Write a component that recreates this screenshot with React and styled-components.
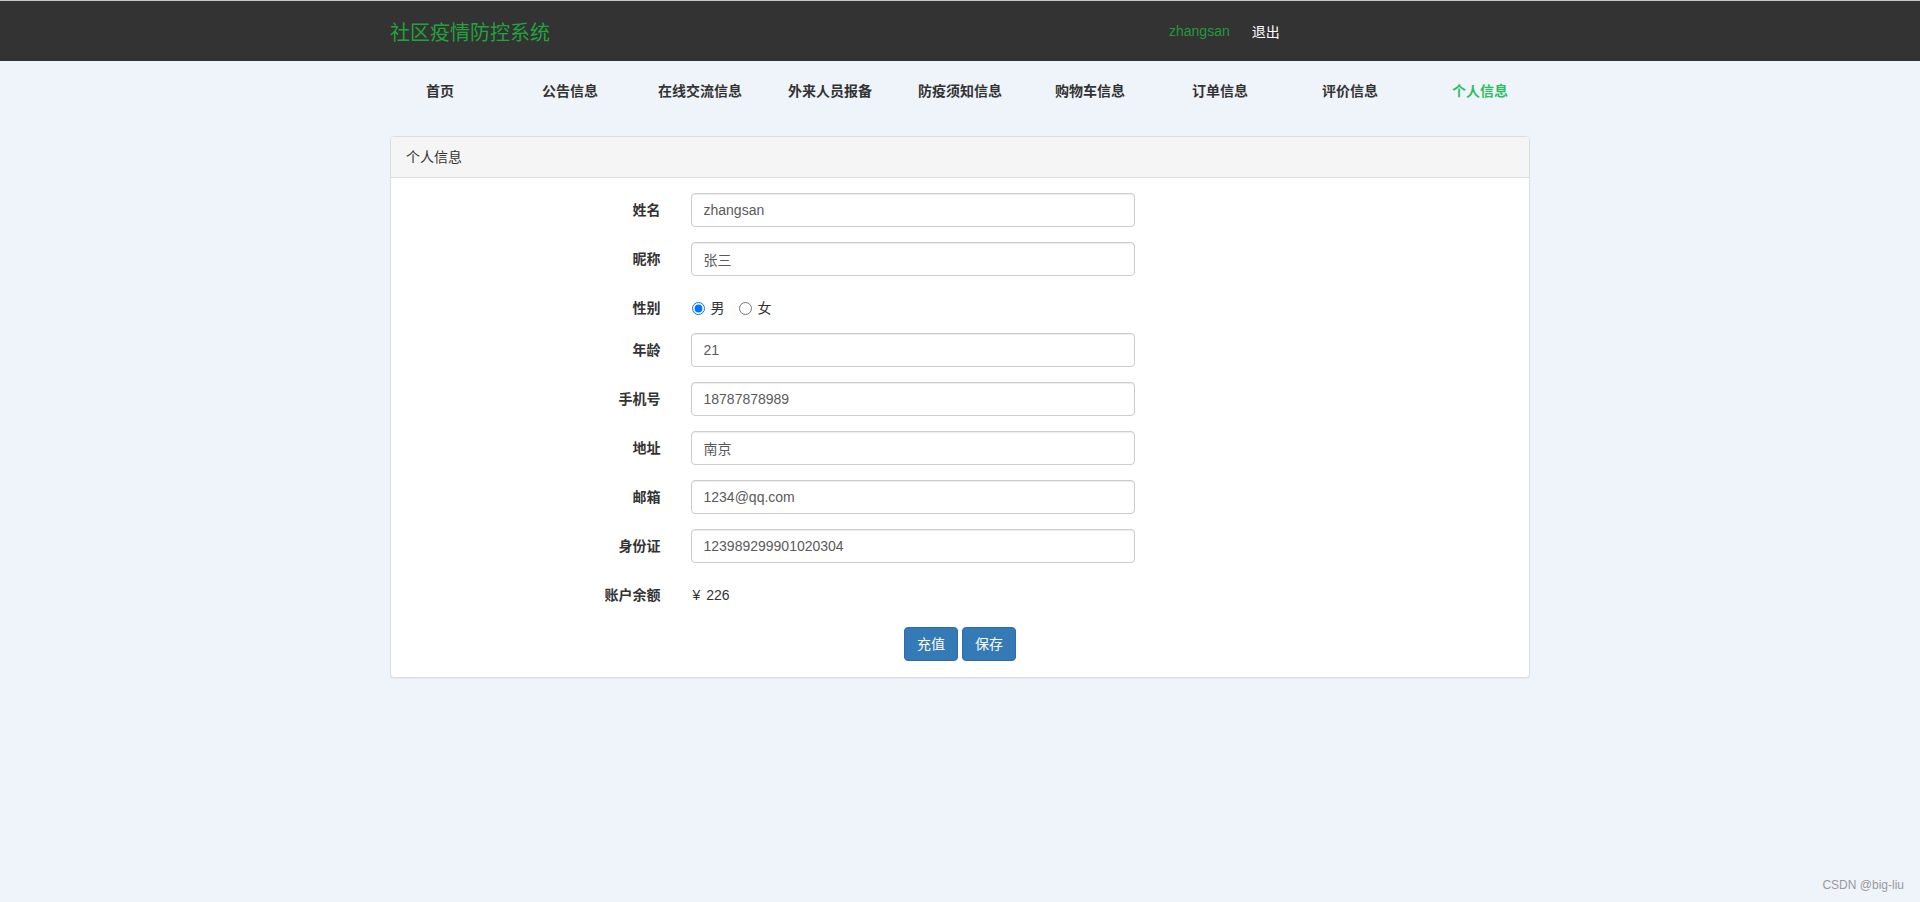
import React from 'react'
import styled, { createGlobalStyle } from 'styled-components'

const GlobalStyle = createGlobalStyle`
  html, body {
    margin: 0;
    padding: 0;
    background: #eff3fa;
    font-family: "Liberation Sans", "Noto Sans CJK SC", sans-serif;
    font-size: 14px;
    color: #333;
  }
  * { box-sizing: border-box; }
`

const Page = styled.div`
  min-height: 902px;
  position: relative;
`

const TopBar = styled.header`
  height: 61px;
  background: #333;
  border-top: 1px solid #c9c9c9;
`

const Container = styled.div`
  width: 1170px;
  margin: 0 auto;
  padding: 0 ${({ $pad }) => ($pad ? '15px' : '0')};
`

const TopInner = styled(Container)`
  height: 60px;
  display: flex;
  align-items: center;
`

const Brand = styled.div`
  font-size: 20px;
  color: #22a23d;
  flex: 0 0 auto;
`

const UserBox = styled.div`
  margin-left: 619px;
  display: flex;
  align-items: center;
  gap: 22px;
  font-size: 14px;
`

const UserName = styled.span`
  color: #1f9b3a;
`

const Logout = styled.span`
  color: #fff;
`

const NavList = styled.ul`
  list-style: none;
  margin: 0 auto;
  padding: 0;
  width: 1170px;
  height: 58px;
  display: grid;
  grid-template-columns: repeat(9, 130px);
`

const NavItem = styled.li`
  display: flex;
  align-items: center;
  justify-content: center;
  font-weight: bold;
  font-size: 14px;
  color: ${({ $active }) => ($active ? '#2dbd62' : '#333')};
`

const Panel = styled.section`
  margin: 17px auto 0;
  width: 1140px;
  background: #fff;
  border: 1px solid #ddd;
  border-radius: 4px;
  box-shadow: 0 1px 1px rgba(0, 0, 0, 0.05);
`

const PanelHeading = styled.div`
  background: #f5f5f5;
  border-bottom: 1px solid #ddd;
  padding: 10px 15px;
  line-height: 20px;
  font-size: 14px;
  color: #333;
  border-radius: 3px 3px 0 0;
`

const PanelBody = styled.div`
  padding: 15px 0 16px;
`

const FormRow = styled.div`
  display: grid;
  grid-template-columns: 284.5px 474px;
  margin-bottom: 15px;
`

const Label = styled.label`
  text-align: right;
  padding: 7px 15px 0;
  font-weight: bold;
  line-height: 20px;
  font-size: 14px;
  color: #333;
`

const Field = styled.div`
  padding: 0 15px;
`

const TextInput = styled.input`
  display: block;
  width: 100%;
  height: 34px;
  padding: 6px 12px;
  font-family: inherit;
  font-size: 14px;
  line-height: 20px;
  color: #5a5a5a;
  background: #fff;
  border: 1px solid #ccc;
  border-radius: 4px;
  box-shadow: inset 0 1px 1px rgba(0, 0, 0, 0.075);
  outline: none;
`

const RadioGroup = styled.div`
  display: flex;
  align-items: center;
  height: 27px;
  padding-top: 7px;
  gap: 13px;
`

const RadioLabel = styled.label`
  display: flex;
  align-items: center;
  gap: 6px;
  font-size: 14px;
  color: #333;
  line-height: 20px;
`

const Radio = styled.input`
  margin: 0 0 0 1px;
  width: 13px;
  height: 13px;
`

const StaticText = styled.div`
  padding: 7px 2px 0;
  line-height: 20px;
  color: #333;
  word-spacing: 2px;
`

const Actions = styled.div`
  display: flex;
  justify-content: center;
  gap: 4px;
  margin-top: 22px;
`

const Button = styled.button`
  height: 34px;
  padding: 6px 12px;
  font-family: inherit;
  font-size: 14px;
  line-height: 20px;
  color: #fff;
  background: #337ab7;
  border: 1px solid #2e6da4;
  border-radius: 4px;
  cursor: pointer;
`

const Watermark = styled.div`
  position: absolute;
  right: 16px;
  bottom: 10px;
  font-size: 12px;
  color: #9a9a9a;
`

const navItems = ['首页', '公告信息', '在线交流信息', '外来人员报备', '防疫须知信息', '购物车信息', '订单信息', '评价信息', '个人信息']

const fields = [
  { label: '姓名', value: 'zhangsan' },
  { label: '昵称', value: '张三' },
  { label: '性别', radio: true },
  { label: '年龄', value: '21' },
  { label: '手机号', value: '18787878989' },
  { label: '地址', value: '南京' },
  { label: '邮箱', value: '1234@qq.com' },
  { label: '身份证', value: '123989299901020304' },
]

export default function App() {
  return (
    <Page>
      <GlobalStyle />
      <TopBar>
        <TopInner $pad>
          <Brand>社区疫情防控系统</Brand>
          <UserBox>
            <UserName>zhangsan</UserName>
            <Logout>退出</Logout>
          </UserBox>
        </TopInner>
      </TopBar>

      <NavList>
        {navItems.map((n) => (
          <NavItem key={n} $active={n === '个人信息'}>{n}</NavItem>
        ))}
      </NavList>

      <Panel>
        <PanelHeading>个人信息</PanelHeading>
        <PanelBody>
          {fields.map((f) => (
            <FormRow key={f.label}>
              <Label>{f.label}</Label>
              <Field>
                {f.radio ? (
                  <RadioGroup>
                    <RadioLabel>
                      <Radio type="radio" name="sex" defaultChecked />男
                    </RadioLabel>
                    <RadioLabel>
                      <Radio type="radio" name="sex" />女
                    </RadioLabel>
                  </RadioGroup>
                ) : (
                  <TextInput defaultValue={f.value} />
                )}
              </Field>
            </FormRow>
          ))}
          <FormRow>
            <Label>账户余额</Label>
            <Field>
              <StaticText>¥ 226</StaticText>
            </Field>
          </FormRow>
          <Actions>
            <Button>充值</Button>
            <Button>保存</Button>
          </Actions>
        </PanelBody>
      </Panel>

      <Watermark>CSDN @big-liu</Watermark>
    </Page>
  )
}
